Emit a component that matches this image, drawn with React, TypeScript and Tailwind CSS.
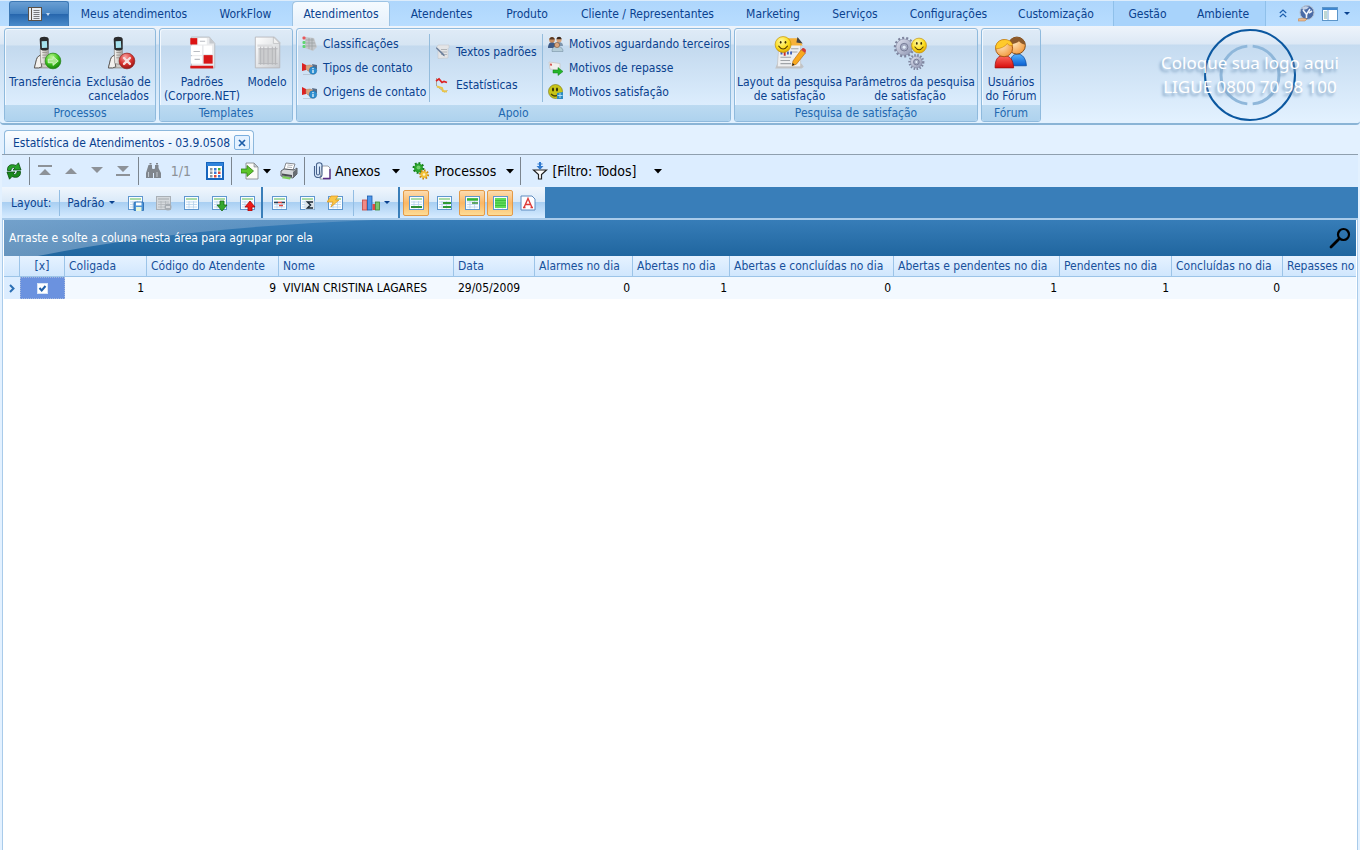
import type { ReactNode } from "react";

type Tab = { label: string; width: string; active?: boolean };

const TABS: Tab[] = [
  { label: "Meus atendimentos", width: "w-[130px]" },
  { label: "WorkFlow", width: "w-[93px]" },
  { label: "Atendimentos", width: "w-[98px]", active: true },
  { label: "Atendentes", width: "w-[103px]" },
  { label: "Produto", width: "w-[68px]" },
  { label: "Cliente / Representantes", width: "w-[173px]" },
  { label: "Marketing", width: "w-[78px]" },
  { label: "Serviços", width: "w-[86px]" },
  { label: "Configurações", width: "w-[101px]" },
  { label: "Customização", width: "w-[114px]" },
];

const COLUMNS = [
  { label: "Coligada", width: "w-[82px]", value: "1", right: true },
  { label: "Código do Atendente", width: "w-[132px]", value: "9", right: true },
  { label: "Nome", width: "w-[175px]", value: "VIVIAN CRISTINA LAGARES", right: false },
  { label: "Data", width: "w-[81px]", value: "29/05/2009", right: false },
  { label: "Alarmes no dia", width: "w-[98px]", value: "0", right: true },
  { label: "Abertas no dia", width: "w-[97px]", value: "1", right: true },
  { label: "Abertas e concluídas no dia", width: "w-[164px]", value: "0", right: true },
  { label: "Abertas e pendentes no dia", width: "w-[166px]", value: "1", right: true },
  { label: "Pendentes no dia", width: "w-[112px]", value: "1", right: true },
  { label: "Concluídas no dia", width: "w-[111px]", value: "0", right: true },
  { label: "Repasses no", width: "", value: "", right: true },
];

/* ── Small shared pieces ── */

function Caret({ className = "" }: { className?: string }) {
  return (
    <svg viewBox="0 0 8 5" className={`h-[5px] w-2 shrink-0 ${className}`} fill="currentColor">
      <path d="M0 0h8L4 4.6z" />
    </svg>
  );
}

function Svg16({ children }: { children: ReactNode }) {
  return <svg viewBox="0 0 16 16" className="h-4 w-4 shrink-0">{children}</svg>;
}

function Svg32({ children, viewBox = "0 0 32 32" }: { children: ReactNode; viewBox?: string }) {
  return <svg viewBox={viewBox} className="h-[34px] w-[34px] shrink-0">{children}</svg>;
}

function Defs() {
  return (
    <svg className="absolute h-0 w-0" aria-hidden="true">
      <defs>
        <linearGradient id="paper" x1="0" y1="0" x2="1" y2="1">
          <stop offset="0" stopColor="#ffffff" />
          <stop offset="1" stopColor="#c9ccd0" />
        </linearGradient>
        <linearGradient id="handset" x1="0" y1="0" x2="1" y2="0">
          <stop offset="0" stopColor="#fbfaf7" />
          <stop offset="1" stopColor="#a19d98" />
        </linearGradient>
        <radialGradient id="green" cx="0.4" cy="0.25" r="0.8">
          <stop offset="0" stopColor="#b6f58c" />
          <stop offset="0.55" stopColor="#3fc31d" />
          <stop offset="1" stopColor="#137a0b" />
        </radialGradient>
        <radialGradient id="red" cx="0.4" cy="0.25" r="0.8">
          <stop offset="0" stopColor="#f7a3a0" />
          <stop offset="0.55" stopColor="#d8322f" />
          <stop offset="1" stopColor="#8f1210" />
        </radialGradient>
        <radialGradient id="smile" cx="0.4" cy="0.3" r="0.75">
          <stop offset="0" stopColor="#fff9a5" />
          <stop offset="0.6" stopColor="#fbdc1c" />
          <stop offset="1" stopColor="#dda403" />
        </radialGradient>
        <radialGradient id="skin" cx="0.35" cy="0.35" r="0.8">
          <stop offset="0" stopColor="#ffe3b8" />
          <stop offset="1" stopColor="#f0912f" />
        </radialGradient>
        <linearGradient id="redBody" x1="0" y1="0" x2="0" y2="1">
          <stop offset="0" stopColor="#ff6a5e" />
          <stop offset="1" stopColor="#d60c0c" />
        </linearGradient>
        <linearGradient id="blueBody" x1="0" y1="0" x2="0" y2="1">
          <stop offset="0" stopColor="#53b2ff" />
          <stop offset="1" stopColor="#0a5fd0" />
        </linearGradient>
        <linearGradient id="steel" x1="0" y1="0" x2="1" y2="1">
          <stop offset="0" stopColor="#dfe2f0" />
          <stop offset="1" stopColor="#8d94b0" />
        </linearGradient>
        <linearGradient id="sheen" x1="0" y1="0" x2="1" y2="0">
          <stop offset="0" stopColor="#b4c8e0" stopOpacity="0.480" />
          <stop offset="1" stopColor="#b4c8e0" stopOpacity="0.250" />
        </linearGradient>
      </defs>
    </svg>
  );
}

/* ── Ribbon icons, 32px ── */

function Phone({ children }: { children: ReactNode }) {
  return (
    <Svg32 viewBox="0 0 32 32">
      <path d="M6 30l2-8c1-3 3-4 5-4l7 1 4 5v6z" fill="#cfccc7" stroke="#8d8985" strokeWidth="0.8" />
      <path d="M6 30l2-8c1-3 3-4 5-4l1 1c-2 2-2 6-1 10l-3 1z" fill="#f3f1ee" stroke="#4c4946" strokeWidth="0.8" />
      <path d="M11.500 12h7.500l.5 13c0 2-7.500 2-7.500 0z" fill="url(#handset)" stroke="#8a8681" strokeWidth="0.7" />
      <path d="M11 3c0-3 8.500-3 8.500 0v9c0 2-8 2.500-8 0z" fill="#2a2b2d" />
      <path d="M12.800 5l5-.4.3 6.400-5 .4z" fill="#a6e2ee" />
      <path d="M13.500 15.500h4.500M13.500 18h4.500M13.500 20.500h4.500" stroke="#9a9590" strokeWidth="0.9" />
      {children}
    </Svg32>
  );
}

function TransferIcon() {
  return (
    <Phone>
      <circle cx="23.500" cy="23.500" r="7.400" fill="url(#green)" stroke="#1d7d10" strokeWidth="0.6" />
      <path d="M19 21.800h4.500v-2.500l5 4.200-5 4.200v-2.500h-4.500z" fill="#a9e78f" stroke="#e4fadb" strokeWidth="0.700" />
    </Phone>
  );
}

function DeleteIcon() {
  return (
    <Phone>
      <circle cx="23.500" cy="23.500" r="7.400" fill="url(#red)" stroke="#861a18" strokeWidth="0.6" />
      <path d="M20.700 20.700l5.600 5.600M26.300 20.700l-5.600 5.600" stroke="#f5dedd" strokeWidth="2.200" strokeLinecap="round" />
    </Phone>
  );
}

function TemplateIcon() {
  return (
    <Svg32>
      <path d="M6 1h17l5 6v23H6z" fill="#e9eaec" stroke="#b5b8bd" strokeWidth="0.8" />
      <path d="M23 1l5 6h-5z" fill="#c6c9ce" />
      <rect x="12.500" y="2" width="8" height="6" fill="#fff" />
      <rect x="5.500" y="9" width="10.500" height="9" fill="#fff" />
      <rect x="17.500" y="9" width="8" height="8" fill="#fff" />
      <rect x="5.500" y="19" width="10.500" height="7" fill="#fff" />
      <rect x="5" y="2" width="6.500" height="6" fill="#dc1313" />
      <rect x="17.500" y="18" width="8.500" height="8" fill="#d81616" />
      <rect x="5" y="28" width="21.500" height="2.500" fill="#d81616" />
      <path d="M8 14.500h6M9 22h5M14 5h5" stroke="#b9bcc2" strokeWidth="1" />
    </Svg32>
  );
}

function ModelIcon() {
  return (
    <Svg32>
      <path d="M5 1h18l5 5v24H5z" fill="url(#paper)" stroke="#b3b5b8" strokeWidth="0.8" />
      <path d="M22 1l6 6h-6z" fill="#f1f1f1" stroke="#b3b5b8" strokeWidth="0.6" />
      <path d="M8 12h17v14H8z" fill="#cbccce" />
      <path d="M7 9h14" stroke="#dcdddf" strokeWidth="2" />
      <path d="M10 10v17M13 10v17M17 10v17M21 10v17M24 10v17M8 12h18M8 26h18" stroke="#b4b6b9" strokeWidth="0.9" />
    </Svg32>
  );
}

function Smile({ x, y, r }: { x: number; y: number; r: number }) {
  return (
    <g transform={`translate(${x} ${y})`}>
      <circle r={r} fill="url(#smile)" stroke="#c08c06" strokeWidth="0.6" />
      <ellipse cx={-r * 0.3} cy={-r * 0.28} rx="0.8" ry="1.300" fill="#3a2b05" />
      <ellipse cx={r * 0.3} cy={-r * 0.28} rx="0.8" ry="1.300" fill="#3a2b05" />
      <path d={`M${-r * 0.55} ${r * 0.2}Q0 ${r * 0.95} ${r * 0.55} ${r * 0.2}`} fill="none" stroke="#5a4106" strokeWidth="1" strokeLinecap="round" />
    </g>
  );
}

function SurveyLayoutIcon() {
  return (
    <Svg32>
      <path d="M2 30.500h25l2-1.500-2-3H4z" fill="#c2c4c6" />
      <path d="M6 3h17l3 4v22H4z" fill="#eeeff0" stroke="#bcbcbc" strokeWidth="0.6" />
      <path d="M14 2h10l4 7H16z" fill="#f7b23a" />
      <path d="M23 1l5 6-6-1z" fill="#454545" />
      <path d="M7 20h10M7 23h9M7 26h10M17 12h7M17 15h6" stroke="#a0a4a8" strokeWidth="1" />
      <path d="M8 14.500v3M14 14.500v3M17 14.500v3" stroke="#4464b8" strokeWidth="1.800" />
      <path d="M11 15v3.500" stroke="#c22f2f" strokeWidth="1.800" />
      <Smile x={9.500} y={8} r={7.500} />
      <path d="M26.500 13l4 3-8.500 10.500-4 1.500.8-4.500z" fill="#f9a91e" stroke="#b56a0c" strokeWidth="0.6" />
      <path d="M26.500 13l1-1.300c1-1 4 .8 3.500 2.300L30.500 16z" fill="#d43c34" />
      <path d="M18 28l.5-2.500 1.800 1.500z" fill="#222" />
    </Svg32>
  );
}

function Gear({ x, y, r }: { x: number; y: number; r: number }) {
  return (
    <g transform={`translate(${x} ${y})`}>
      <circle r={r} fill="none" stroke="#7f859f" strokeWidth="2.500" pathLength={28} strokeDasharray="1 1" />
      <circle r={r - 0.8} fill="url(#steel)" stroke="#7b819b" strokeWidth="0.5" />
      <circle r={r * 0.42} fill="#aab0c8" stroke="#6d738d" strokeWidth="0.8" />
      <circle r={r * 0.22} fill="#e3eefa" stroke="#7b819b" strokeWidth="0.400" />
    </g>
  );
}

function SurveyParamsIcon() {
  return (
    <Svg32>
      <Gear x={10.500} y={10.500} r={8.500} />
      <Gear x={22} y={24.500} r={6.300} />
      <Smile x={24.500} y={9} r={7} />
    </Svg32>
  );
}

function UsersIcon() {
  return (
    <Svg32>
      <path d="M15 28c0-8 3-11 7-11 5 0 8 4 8.500 11z" fill="url(#blueBody)" stroke="#0a4a9d" strokeWidth="0.7" />
      <circle cx="21.500" cy="9" r="8" fill="url(#skin)" stroke="#7e4a18" strokeWidth="0.9" />
      <path d="M13.600 8c.5-9 15.300-9 15.900 0-2 0-4-1-6-3-2 2-6 3-9.900 3z" fill="#8c5a2b" />
      <path d="M1 30c0-9 3-11.500 8.500-11.500S18 22 18.500 30z" fill="url(#redBody)" stroke="#97100f" strokeWidth="0.7" />
      <circle cx="9.500" cy="11.500" r="8" fill="url(#skin)" stroke="#a8560f" strokeWidth="0.9" />
      <path d="M1.500 12C1 1 17 1 17.500 9c-2 0-4 0-5-2-2 3-6 5-11 5z" fill="#ffca2b" stroke="#c07909" strokeWidth="0.5" />
    </Svg32>
  );
}

/* ── Ribbon icons, 16px ── */

function ClassifyIcon() {
  return (
    <Svg16>
      <path d="M3 1l9 1 3 9-4 4-8-3z" fill="#c3c6ca" />
      <path d="M4 4h8M4 7h9M4 10h10M7 2v11M10 2v12" stroke="#999da2" strokeWidth="0.7" />
      <rect x="0.500" y="0.500" width="3" height="3" rx="1" fill="#e8575a" />
      <rect x="0.500" y="5" width="3" height="3" rx="1" fill="#5fd672" />
      <rect x="0.500" y="9" width="3" height="3" rx="1" fill="#5fd672" />
    </Svg16>
  );
}

function ContactIcon() {
  return (
    <Svg16>
      <path d="M1 14.500h12" stroke="#aab6c2" strokeWidth="1" opacity="0.6" />
      <path d="M0 3l4 2v5l-4 1z" fill="#dc2222" />
      <path d="M4 5.500l4-.5 3 1 1 3-3 3-3-1-2-2z" fill="#d9a27c" stroke="#b07f5e" strokeWidth="0.5" />
      <path d="M10 4l5 1v4l-3 1z" fill="#5a6f89" />
      <circle cx="11" cy="10.500" r="3.800" fill="#2e8fd0" stroke="#1b6098" strokeWidth="0.4" />
      <path d="M11 10v3M11 8v1.200" stroke="#fff" strokeWidth="1.200" />
    </Svg16>
  );
}

function TextsIcon() {
  return (
    <Svg16>
      <path d="M3 1h11v2.500l-1 1V14l-10 .5V5L1.500 3.500z" fill="#e4e5e7" stroke="#c0c2c5" strokeWidth="0.5" />
      <path d="M6 5.500h6M6 8h6M6 10.500h6" stroke="#a5a8ac" strokeWidth="0.8" />
      <path d="M1.500 3l7.500 7 1 2.500-2.300-1.200L1 4.500z" fill="#6e819d" />
    </Svg16>
  );
}

function StatsIcon() {
  return (
    <Svg16>
      <path d="M1.500 1v8l8 6 3-1.500" fill="none" stroke="#a8a296" strokeWidth="1" />
      <path d="M2 9.500l5 1.500 1 3 4 .5" fill="none" stroke="#e9c44a" strokeWidth="2" />
      <path d="M1 4l3-2 3 3.500 2-1 3 1" fill="none" stroke="#db2323" strokeWidth="1.800" />
    </Svg16>
  );
}

function PeopleIcon() {
  return (
    <Svg16>
      <path d="M0 12c0-4 2-6 4-6s4 2 4 6z" fill="#3e5a86" />
      <circle cx="4" cy="4" r="2.800" fill="#c98d60" />
      <path d="M1.300 3.500C1.500 0 6.500 0 6.700 3.500z" fill="#5a3a22" />
      <path d="M7 10c0-3 2-4 4-4s4 1 4 4z" fill="#7c94ad" />
      <circle cx="11" cy="3.800" r="2.600" fill="#d8a47c" />
      <path d="M8.500 3.300C8.600 0 13.500 0 13.600 3.300z" fill="#3c2a1e" />
      <path d="M4 15.500c0-4 2-5 5-5s6 1 6 5z" fill="#b4ccd8" stroke="#6d8798" strokeWidth="0.5" />
      <circle cx="9" cy="9" r="2.600" fill="#d9a67f" stroke="#6f4527" strokeWidth="0.5" />
    </Svg16>
  );
}

function ForwardMailIcon() {
  return (
    <Svg16>
      <path d="M1 2l11 1.500v7L2 9z" fill="#f1efee" stroke="#c9c2be" strokeWidth="0.7" />
      <path d="M2 3.500l2 .3v2l-2-.3z" fill="#d65b55" />
      <path d="M5 10h5V7.500l5 4-5 4V13H5z" fill="#24b52b" stroke="#138018" strokeWidth="0.5" />
    </Svg16>
  );
}

function SatisfactionIcon() {
  return (
    <Svg16>
      <circle cx="7.500" cy="7.500" r="7" fill="#c8c518" stroke="#77740e" strokeWidth="0.6" />
      <ellipse cx="5" cy="5.500" rx="1" ry="2" fill="#333208" />
      <ellipse cx="9" cy="5.500" rx="1" ry="2" fill="#333208" />
      <path d="M3 10q4 4 8 0" fill="none" stroke="#4c4a09" strokeWidth="1.300" />
      <path d="M9 9l6-1v7H9z" fill="#2e8dc4" />
      <path d="M12 9v5M9.500 11.500h5" stroke="#bfe5f7" strokeWidth="0.900" />
    </Svg16>
  );
}

/* ── Toolbar icons ── */

function RefreshIcon() {
  return (
    <svg viewBox="0 0 16 18" className="h-[18px] w-4 shrink-0">
      <path d="M1.500 8.500C1 3 5.500 1.500 10 3.500L12.500.8 15 8H7l2-2C7 5 5 6 5 8.500z" fill="#26a12a" stroke="#0b4f10" strokeWidth="0.8" />
      <path d="M14.500 9.500c.5 5.500-4 7-8.500 5L3.500 17.200 1 10h8l-2 2c2 1 4 0 4-2.500z" fill="#188a1c" stroke="#0b4f10" strokeWidth="0.8" />
    </svg>
  );
}

function NavIcon({ kind }: { kind: "first" | "prev" | "next" | "last" }) {
  return (
    <svg viewBox="0 0 14 12" className="h-3 w-3.5 shrink-0" fill="#8d9298">
      {kind === "first" && <path d="M0 0h14v2H0zM7 4l6 6H1z" />}
      {kind === "prev" && <path d="M7 3l6 6H1z" />}
      {kind === "next" && <path d="M1 2h12L7 8z" />}
      {kind === "last" && <path d="M1 1h12L7 7zM0 9h14v2H0z" />}
    </svg>
  );
}

function BinocularsIcon() {
  return (
    <svg viewBox="0 0 17 16" className="h-4 w-[17px] shrink-0" fill="#80868d">
      <path d="M3.500 2H7v3l1 2v8H1v-5zM10 2h3.500v3l2.500 5v5H9V7l1-2z" />
      <path d="M7 6h3v4H7z" />
      <path d="M3.500 9v5M12 9v5" stroke="#c0c6cc" strokeWidth="1" />
      <path d="M4.500 .8h2M11 .8h2" stroke="#80868d" strokeWidth="1.500" />
    </svg>
  );
}

function GridIcon() {
  return (
    <svg viewBox="0 0 18 18" className="h-[18px] w-[18px] shrink-0">
      <rect x="1" y="1" width="16" height="16" fill="#fff" stroke="#1765bd" strokeWidth="2" />
      <rect x="1" y="1" width="16" height="3" fill="#2f83dc" />
      <path d="M4 6h2.500v2.500H4zM4 9.500h2.500V12H4zM4 13h2.500v2.500H4z" fill="#8b95a0" />
      <path d="M8 6h2.500v2.500H8zM12 13h2.500v2.500H12zM8 9.500h2.500V12H8z" fill="#3577d8" />
      <path d="M12 6h2.500v2.500H12z" fill="#49ad3c" />
      <path d="M8 13h2.500v2.500H8zM12 9.500h2.500V12H12z" fill="#d8483b" />
    </svg>
  );
}

function ExportIcon() {
  return (
    <svg viewBox="0 0 18 18" className="h-[18px] w-[18px] shrink-0">
      <path d="M5 1h8l4 4v12H5z" fill="#fbfbf7" stroke="#7b8084" strokeWidth="0.8" />
      <path d="M13 1l4 4h-4z" fill="#c6cbd0" stroke="#7b8084" strokeWidth="0.6" />
      <path d="M0 7h6V3.500L12.500 9 6 14.500V11H0z" fill="#5cc62a" stroke="#2c7d10" strokeWidth="0.8" />
    </svg>
  );
}

function PrinterIcon() {
  return (
    <svg viewBox="0 0 18 18" className="h-[18px] w-[18px] shrink-0">
      <path d="M6 1l9 1-2 6-9-1z" fill="#fff" stroke="#6b6f74" strokeWidth="0.8" />
      <path d="M7.500 3l5 .5M7 5l5 .5" stroke="#9aa0a6" strokeWidth="0.8" />
      <path d="M1 9l3-2 10 1 3-2v6l-4 4-12-2z" fill="#d4d7da" stroke="#4f5358" strokeWidth="0.9" />
      <path d="M13 10l4-3.500V12l-4 4z" fill="#686d73" />
      <path d="M2 11.500l10 1.500v2l-10-1.500z" fill="#4b4f54" />
      <path d="M3 14l8 1.500-1 2-8-1.300z" fill="#7fd05c" />
    </svg>
  );
}

function AttachIcon() {
  return (
    <svg viewBox="0 0 18 18" className="h-[18px] w-[18px] shrink-0">
      <path d="M9 4h6l2 2v11H7z" fill="#fff" stroke="#7a7c84" strokeWidth="0.7" />
      <path d="M10 16.500h7V7" fill="none" stroke="#5b2d86" strokeWidth="1.300" />
      <path d="M6.500 4.500v7c0 2-3 2-3 0V3c0-3 5.500-3 5.500 0v9.500c0 4-7.500 4-7.500 0V4" fill="none" stroke="#46628c" strokeWidth="1.100" />
    </svg>
  );
}

function ProcessIcon() {
  return (
    <svg viewBox="0 0 18 18" className="h-[18px] w-[18px] shrink-0">
      <circle cx="6.500" cy="6" r="4.500" fill="#2aa52d" />
      <circle cx="6.500" cy="6" r="4.900" fill="none" stroke="#16801c" strokeWidth="2" pathLength={16} strokeDasharray="1 1" />
      <circle cx="6.500" cy="5.500" r="2" fill="#6fd06c" />
      <circle cx="12" cy="12.500" r="3.600" fill="#f2c037" />
      <circle cx="12" cy="12.500" r="4.200" fill="none" stroke="#c8870f" strokeWidth="1.800" pathLength={16} strokeDasharray="1 1" />
      <circle cx="12" cy="12.500" r="1.300" fill="#fff2c6" />
    </svg>
  );
}

function FilterIcon() {
  return (
    <svg viewBox="0 0 16 18" className="h-[18px] w-4 shrink-0">
      <path d="M1.500 8h13l-5 4.500V17H6.500v-4.500z" fill="#fff" stroke="#222" strokeWidth="1.200" />
      <path d="M8 0v5" stroke="#2e79cf" strokeWidth="2" />
      <path d="M4.500 4h7L8 7.800z" fill="#2e79cf" />
      <path d="M5.500 2h5" stroke="#2e79cf" strokeWidth="1" />
    </svg>
  );
}

/* Sheet with a title band; each layout icon draws its mark over it */
function Sheet({ children, gray = false }: { children?: ReactNode; gray?: boolean }) {
  return (
    <svg viewBox="0 0 17 16" className="h-4 w-[17px] shrink-0">
      <rect x="1.500" y="1.500" width="14" height="13" fill={gray ? "#d5d9dd" : "#fafdff"} stroke={gray ? "#a9b0b7" : "#5f97cf"} strokeWidth="1" />
      <path d="M3 4h11" stroke={gray ? "#b3b8bd" : "#8fcf8b"} strokeWidth="1.500" />
      <path d="M3 7h11M3 9.500h11M3 12h11M6 6v7.500M10.500 6v7.500" stroke={gray ? "#b0b5ba" : "#b6d2ec"} strokeWidth="0.800" />
      {children}
    </svg>
  );
}

const LAYOUT_ICONS: { name: string; icon: ReactNode }[] = [
  {
    name: "Salvar layout",
    icon: (
      <Sheet>
        <rect x="7" y="7" width="9.500" height="9" rx="1" fill="#4a93d8" stroke="#1f62a8" strokeWidth="0.800" />
        <rect x="9" y="7.500" width="5.500" height="3" fill="#fff" />
        <rect x="9" y="12" width="5.500" height="4" fill="#e6f5dc" />
      </Sheet>
    ),
  },
  { name: "Excluir layout", icon: <Sheet gray><circle cx="13" cy="12" r="3.500" fill="#a7adb3" /><path d="M11 12h4" stroke="#e4e7ea" strokeWidth="1.500" /></Sheet> },
  { name: "Colunas", icon: <Sheet /> },
  { name: "Importar layout", icon: <Sheet><path d="M9 6h4v4h3l-5 6-5-6h3z" fill="#36a82d" stroke="#1b6a15" strokeWidth="0.800" /></Sheet> },
  { name: "Exportar layout", icon: <Sheet><path d="M9 16h4v-4h3l-5-6-5 6h3z" fill="#f01a1a" stroke="#a00c0c" strokeWidth="0.800" /></Sheet> },
];

const VIEW_ICONS: { name: string; icon: ReactNode }[] = [
  { name: "Formatação", icon: <Sheet><path d="M3 7.500h4M11 7.500h3" stroke="#2c3f52" strokeWidth="1.600" /><path d="M7 7.500h4M8 10.500h4" stroke="#e0463f" strokeWidth="1.600" /></Sheet> },
  { name: "Totais", icon: <Sheet><rect x="6" y="5.500" width="9.500" height="9" fill="#dbe3ea" /><path d="M14 7H8.500l3 3-3 3H14" fill="none" stroke="#1d2a36" strokeWidth="1.500" /></Sheet> },
  { name: "Atualização rápida", icon: <Sheet><path d="M4 1h7L8.500 5H12L4 12l2-5H0z" fill="#fbc646" stroke="#dc9418" strokeWidth="0.700" /></Sheet> },
];

const BAND_ICONS: { name: string; on: boolean; icon: ReactNode }[] = [
  { name: "Rodapé", on: true, icon: <Sheet><path d="M3 12h11" stroke="#2f8e33" strokeWidth="2" /></Sheet> },
  { name: "Rodapé do grupo", on: false, icon: <Sheet><path d="M7 8h8M7 12h8" stroke="#2f9a35" strokeWidth="2.200" /></Sheet> },
  { name: "Cabeçalho", on: true, icon: <Sheet><path d="M3 4.500h11" stroke="#35b237" strokeWidth="2.500" /><path d="M8 8h6" stroke="#2f8e33" strokeWidth="1.500" /></Sheet> },
  { name: "Linhas alternadas", on: true, icon: <Sheet><rect x="3" y="3" width="11" height="10" fill="#5fdc58" /><path d="M3 5.500h11M3 8h11M3 10.500h11" stroke="#35b637" strokeWidth="0.800" /></Sheet> },
];

/* ── Ribbon pieces ── */

function RibbonGroup({ title, className, children }: { title: string; className: string; children: ReactNode }) {
  return (
    <section className={`flex h-[94px] flex-col overflow-hidden rounded-[3px] border border-[#8fbadd] bg-[linear-gradient(to_bottom,#dfebf7_0,#d6e5f3_16px,#c3d9ee_17px,#dcedfd_76px)] shadow-[inset_1px_1px_0_#f2f8fe] ${className}`}>
      <div className="min-h-0 flex-1">{children}</div>
      <h2 className="h-4 bg-[linear-gradient(to_bottom,#bcdaf1,#aed2ee)] text-center leading-4 text-[#2369b0]">{title}</h2>
    </section>
  );
}

function BigButton({ icon, lines, className }: { icon: ReactNode; lines: string[]; className: string }) {
  return (
    <button type="button" className={`flex shrink-0 flex-col items-center pt-[7px] ${className}`}>
      {icon}
      <span className="mt-[5px] block leading-[14px] whitespace-nowrap">
        {lines.map((l) => <span key={l} className="block">{l}</span>)}
      </span>
    </button>
  );
}

function SmallButton({ icon, label, className = "" }: { icon: ReactNode; label: string; className?: string }) {
  return (
    <button type="button" className={`flex items-center gap-[5px] whitespace-nowrap ${className}`}>
      {icon}
      {label}
    </button>
  );
}

function GroupRule() {
  return <span className="mt-[5px] h-[68px] w-px shrink-0 bg-[#94bcdc]" />;
}

function Ribbon() {
  return (
    <div className="flex h-[99px] items-start gap-[3px] rounded-b-sm border-b-2 border-[#8ab4d6] bg-[linear-gradient(to_bottom,#eef4fb_0,#dce8f5_18px,#c5dbf0_19px,#e2f1ff_94px)] pt-[2px] pr-[18px] pl-1 text-[#0a428f]">
      <RibbonGroup title="Processos" className="w-[152px]">
        <div className="flex pl-[3px]">
          <BigButton icon={<TransferIcon />} lines={["Transferência"]} className="w-[74px]" />
          <BigButton icon={<DeleteIcon />} lines={["Exclusão de", "cancelados"]} className="w-[73px]" />
        </div>
      </RibbonGroup>
      <RibbonGroup title="Templates" className="w-[134px]">
        <div className="flex">
          <BigButton icon={<TemplateIcon />} lines={["Padrões", "(Corpore.NET)"]} className="w-[84px]" />
          <BigButton icon={<ModelIcon />} lines={["Modelo"]} className="w-[46px]" />
        </div>
      </RibbonGroup>
      <RibbonGroup title="Apoio" className="w-[435px]">
        <div className="flex">
          <div className="flex w-[132px] flex-col pt-[3px] pl-[5px]">
            <SmallButton icon={<ClassifyIcon />} label="Classificações" className="h-6" />
            <SmallButton icon={<ContactIcon />} label="Tipos de contato" className="h-6" />
            <SmallButton icon={<ContactIcon />} label="Origens de contato" className="h-6" />
          </div>
          <GroupRule />
          <div className="flex w-[112px] flex-col pt-[6px] pl-[5px]">
            <SmallButton icon={<TextsIcon />} label="Textos padrões" className="h-[33px]" />
            <SmallButton icon={<StatsIcon />} label="Estatísticas" className="h-[33px]" />
          </div>
          <GroupRule />
          <div className="flex flex-col pt-[3px] pl-[5px]">
            <SmallButton icon={<PeopleIcon />} label="Motivos aguardando terceiros" className="h-6" />
            <SmallButton icon={<ForwardMailIcon />} label="Motivos de repasse" className="h-6" />
            <SmallButton icon={<SatisfactionIcon />} label="Motivos satisfação" className="h-6" />
          </div>
        </div>
      </RibbonGroup>
      <RibbonGroup title="Pesquisa de satisfação" className="w-[244px]">
        <div className="flex">
          <BigButton icon={<SurveyLayoutIcon />} lines={["Layout da pesquisa", "de satisfação"]} className="w-[109px]" />
          <BigButton icon={<SurveyParamsIcon />} lines={["Parâmetros da pesquisa", "de satisfação"]} className="w-[132px]" />
        </div>
      </RibbonGroup>
      <RibbonGroup title="Fórum" className="w-[60px]">
        <div className="flex">
          <BigButton icon={<UsersIcon />} lines={["Usuários", "do Fórum"]} className="w-[58px]" />
        </div>
      </RibbonGroup>

      {/* Customer logo placeholder, text laid over the rings */}
      <div className="relative ml-auto flex h-[94px] w-[184px] flex-col items-center justify-center font-['Noto_Sans',sans-serif] text-[17px] leading-6 whitespace-nowrap text-white">
        <svg viewBox="0 0 94 94" className="absolute top-0 left-1/2 h-[94px] w-[94px] -translate-x-1/2" fill="none">
          <circle cx="47" cy="47" r="45" stroke="#0c58a0" strokeWidth="2" />
          <circle cx="47" cy="47" r="29" stroke="#8fb7da" strokeWidth="3" pathLength={100} strokeDasharray="47 3" strokeDashoffset="23.500" />
        </svg>
        <span className="relative [text-shadow:-2px_3px_3px_#7d9fc0]">Coloque sua logo aqui</span>
        <span className="relative [text-shadow:-2px_3px_3px_#7d9fc0]">LIGUE 0800 70 98 100</span>
      </div>
    </div>
  );
}

function TabBar() {
  return (
    <nav className="flex h-[26px] items-stretch border-t border-[#dcecfb] bg-[linear-gradient(to_bottom,#aed6fc,#b8ddff)] pl-[9px] text-[#0a428f]">
      <button type="button" aria-label="Menu" className="flex w-[60px] items-center justify-center gap-1 rounded-t-[3px] border border-b-0 border-[#3d79b5] bg-[linear-gradient(to_bottom,#6a9fd3_0,#4482c1_50%,#2766ad_51%,#4b8ccb_100%)] text-[#c4daf0]">
        <svg viewBox="0 0 14 14" className="h-3.5 w-3.5">
          <rect x="0.500" y="0.500" width="13" height="13" fill="#e8edf2" stroke="#5a5148" />
          <path d="M3.500 1v12" stroke="#5a5148" strokeWidth="1" />
          <path d="M5.500 3.500h6M5.500 5.500h6M5.500 7.500h6M5.500 9.500h6M5.500 11.500h6" stroke="#6a6c70" strokeWidth="0.900" />
        </svg>
        <svg viewBox="0 0 4 3" className="h-[3px] w-1" fill="currentColor"><path d="M0 0h4L2 3z" /></svg>
      </button>
      {TABS.map((t) => (
        <a
          key={t.label}
          href="#"
          className={`flex shrink-0 items-center justify-center whitespace-nowrap ${t.width} ${
            t.active ? "rounded-t-[4px] bg-[linear-gradient(to_bottom,#f6fbff,#e6f1fb)] shadow-[inset_1px_1px_0_#9cc3e4,inset_-1px_0_0_#9cc3e4]" : ""
          }`}
        >
          {t.label}
        </a>
      ))}
      <a href="#" className="flex w-[68px] shrink-0 items-center justify-center border-l border-[#8fc0ea] bg-[#a8d3fb]">Gestão</a>
      <a href="#" className="flex w-[85px] shrink-0 items-center justify-center border-r border-[#8fc0ea] bg-[#a8d3fb]">Ambiente</a>
      <div className="ml-auto flex items-center pr-[10px]">
        <button type="button" aria-label="Recolher" className="w-4">
          <svg viewBox="0 0 8 9" className="mx-auto h-[9px] w-2" fill="none" stroke="#1d5fae" strokeWidth="1.200">
            <path d="M.8 4L4 1l3.200 3M.8 8L4 5l3.200 3" />
          </svg>
        </button>
        <button type="button" aria-label="Portal" className="ml-[7px] w-[17px]">
          <svg viewBox="0 0 17 17" className="h-[17px] w-[17px]">
            <circle cx="9" cy="7.500" r="7" fill="#4a6ba6" stroke="#b3bfce" strokeWidth="1" />
            <path d="M4 3c2-2 5-2 7-1l-2 2-4 1z" fill="#c4d1e6" />
            <path d="M5 5l3.500 4.500M12 4L8.500 9.500V13M11 8l3-2" fill="none" stroke="#eef3fa" strokeWidth="1.600" />
            <path d="M0 14c3-1 6-1 9 0l-2 2H0z" fill="#eab98e" stroke="#b57845" strokeWidth="0.500" />
          </svg>
        </button>
        <button type="button" aria-label="Painéis" className="ml-[7px] flex items-center gap-1.5 text-[#0a428f]">
          <svg viewBox="0 0 16 14" className="h-3.5 w-4">
            <rect x="0.500" y="0.500" width="15" height="13" fill="#fff" stroke="#5c95c9" />
            <path d="M1 2h14" stroke="#3f87cf" strokeWidth="2" />
            <path d="M6 3v10" stroke="#7eaedb" strokeWidth="1" />
            <path d="M2 5h3M2 7h3M2 9h3M2 11h3" stroke="#7fb0a9" strokeWidth="1" />
          </svg>
          <svg viewBox="0 0 6 3" className="h-[3px] w-1.5" fill="currentColor"><path d="M0 0h6L3 3z" /></svg>
        </button>
      </div>
    </nav>
  );
}

/* ── Document area ── */

function ToolRule() {
  return <span className="h-[28px] w-px shrink-0 bg-[#7b858f]" />;
}

function RecordToolbar() {
  const cell = "flex h-7 shrink-0 items-center justify-center";
  return (
    <div role="toolbar" aria-label="Registros" className="flex h-[33px] items-center border-t border-[#8f9fae] bg-[#dcedff] pl-0.5 text-[14px] text-black">
      <button type="button" aria-label="Atualizar" className={`${cell} mr-[5px] w-5`}><RefreshIcon /></button>
      <ToolRule />
      <button type="button" aria-label="Primeiro" className={`${cell} ml-0.5 w-[26px]`}><NavIcon kind="first" /></button>
      <button type="button" aria-label="Anterior" className={`${cell} w-[26px]`}><NavIcon kind="prev" /></button>
      <button type="button" aria-label="Próximo" className={`${cell} w-[26px]`}><NavIcon kind="next" /></button>
      <button type="button" aria-label="Último" className={`${cell} mr-0.5 w-[26px]`}><NavIcon kind="last" /></button>
      <ToolRule />
      <button type="button" aria-label="Localizar" className={`${cell} w-7`}><BinocularsIcon /></button>
      <span className="w-7 text-center text-[#8d9298]">1/1</span>
      <button type="button" aria-label="Grade" className={`${cell} mr-[3px] ml-[7px] w-[26px]`}><GridIcon /></button>
      <ToolRule />
      <button type="button" aria-label="Exportar" className={`${cell} ml-1.5 w-9 gap-1`}><ExportIcon /><Caret /></button>
      <button type="button" aria-label="Imprimir" className={`${cell} mx-[3px] w-6`}><PrinterIcon /></button>
      <ToolRule />
      <button type="button" className={`${cell} ml-2 gap-1`}><AttachIcon />Anexos<Caret className="ml-2" /></button>
      <button type="button" className={`${cell} ml-3 gap-1`}><ProcessIcon />Processos<Caret className="ml-1.5" /></button>
      <span className="w-1.5" />
      <ToolRule />
      <button type="button" className={`${cell} ml-[11px] gap-1`}><FilterIcon />[Filtro: Todos]<Caret className="ml-3.5" /></button>
    </div>
  );
}

function LayoutToolbar() {
  const cell = "flex h-[26px] shrink-0 items-center justify-center";
  const strip = "flex items-center bg-[linear-gradient(to_bottom,#f0f6fd_0,#d9e9f8_49%,#a9cff2_50%,#d6ebff_100%)]";
  return (
    <div role="toolbar" aria-label="Layout" className="flex h-[31px] items-stretch gap-0.5 bg-[#397eb9] text-[#0a428f]">
      <div className={`${strip} w-[259px]`}>
        <label htmlFor="layout" className="pl-[9px]">Layout:</label>
        <span className="mr-[7px] ml-2 h-[26px] w-px bg-[#92bde3]" />
        <div className="relative flex w-[55px] items-center">
          <select id="layout" className="w-full appearance-none bg-transparent pr-3 outline-none">
            <option>Padrão</option>
          </select>
          <svg viewBox="0 0 6 3" className="pointer-events-none absolute right-1.5 h-[3px] w-1.5" fill="currentColor"><path d="M0 0h6L3 3z" /></svg>
        </div>
        {LAYOUT_ICONS.map((i) => (
          <button key={i.name} type="button" aria-label={i.name} className={`${cell} w-7`}>{i.icon}</button>
        ))}
      </div>
      <div className={`${strip} w-[135px] pl-0.5`}>
        {VIEW_ICONS.map((i) => (
          <button key={i.name} type="button" aria-label={i.name} className={`${cell} w-7`}>{i.icon}</button>
        ))}
        <span className="ml-1 h-[26px] w-px bg-[#92bde3]" />
        <button type="button" aria-label="Gráficos" className="ml-2 flex items-center gap-1">
          <svg viewBox="0 0 18 16" className="h-4 w-[18px]">
            <rect x="0.500" y="5" width="4.500" height="10" fill="#f08a86" stroke="#c54743" strokeWidth="0.800" />
            <rect x="5.500" y="1" width="4.500" height="14" fill="#4f97ea" stroke="#1c5cad" strokeWidth="0.800" />
            <rect x="10.500" y="9" width="3" height="6" fill="#e04a46" />
            <rect x="13.500" y="7" width="4" height="8" fill="#7bc66f" stroke="#3e8a37" strokeWidth="0.800" />
          </svg>
          <svg viewBox="0 0 6 3" className="h-[3px] w-1.5" fill="currentColor"><path d="M0 0h6L3 3z" /></svg>
        </button>
      </div>
      <div className={`${strip} w-[145px] pl-0.5`}>
        {BAND_ICONS.map((i) => (
          <button
            key={i.name}
            type="button"
            aria-label={i.name}
            aria-pressed={i.on}
            className={`${cell} mx-px w-[26px] ${i.on ? "rounded-[2px] border border-[#e39a48] bg-[linear-gradient(to_bottom,#fcdcb0,#fbb765_50%,#fddc96)]" : ""}`}
          >
            {i.icon}
          </button>
        ))}
        <button type="button" aria-label="Fonte" className={`${cell} w-7`}>
          <svg viewBox="0 0 16 16" className="h-4 w-4">
            <path d="M1 1h11l3 3v11H1z" fill="#fdfdff" stroke="#5f8cc0" />
            <path d="M4 12.500L8 3.500l4 9M5.500 9.500h5M3 12.500h2.500M10.500 12.500H13" fill="none" stroke="#dd3b38" strokeWidth="1.400" />
          </svg>
        </button>
      </div>
    </div>
  );
}

function GroupPanel() {
  return (
    <div className="relative flex h-[36px] items-center justify-between bg-[linear-gradient(to_bottom,#377db8,#20669f)] px-[5px] text-white">
      <svg viewBox="0 0 370 36" preserveAspectRatio="none" className="absolute top-0 left-0 h-full w-[370px]">
        <path d="M0 0h370Q170 8 34 36H0z" fill="url(#sheen)" />
      </svg>
      <p className="relative">Arraste e solte a coluna nesta área para agrupar por ela</p>
      <button type="button" aria-label="Pesquisar" className="relative">
        <svg viewBox="0 0 22 22" className="h-[22px] w-[22px]" fill="none" stroke="#000" strokeLinecap="round">
          <circle cx="14.500" cy="7.500" r="5.500" strokeWidth="2.200" />
          <path d="M10 12l-8 8" strokeWidth="2.800" />
        </svg>
      </button>
    </div>
  );
}

function DataGrid() {
  const head = "overflow-hidden border-r border-b border-[#9cc4e8] px-1 font-normal whitespace-nowrap";
  return (
    <table className="w-full table-fixed border-separate border-spacing-0">
      <thead>
        <tr className="h-[21px] bg-[linear-gradient(to_bottom,#e6f2ff,#cfe6fd)] text-[#17509b]">
          <th className={`${head} w-4`} />
          <th className={`${head} w-[45px] text-center`}>[x]</th>
          {COLUMNS.map((c) => (
            <th key={c.label} className={`${head} ${c.width} text-left last:border-r-0`}>{c.label}</th>
          ))}
        </tr>
      </thead>
      <tbody>
        <tr className="h-[22px] bg-[#f3f9ff] text-black">
          <td className="bg-[#dcedff] text-center">
            <svg viewBox="0 0 6 9" className="mx-auto h-[9px] w-1.5" fill="none" stroke="#2b6fb5" strokeWidth="2"><path d="M1 1l3.500 3.500L1 8" /></svg>
          </td>
          <td className="border border-dotted border-[#a5b8dd] bg-[#6b92df]">
            <div className="relative mx-auto h-[11px] w-[11px]">
              <input type="checkbox" defaultChecked aria-label="Selecionar registro" className="peer block h-[11px] w-[11px] appearance-none border border-[#d5e4f7] bg-white" />
              <svg viewBox="0 0 11 11" className="pointer-events-none absolute inset-0 hidden h-[11px] w-[11px] peer-checked:block" fill="none" stroke="#1f5fa8" strokeWidth="2"><path d="M2.500 5l2.200 2.500L8.500 3" /></svg>
            </div>
          </td>
          {COLUMNS.map((c) => (
            <td key={c.label} className={`overflow-hidden whitespace-nowrap ${c.right ? "pr-[3px] text-right" : "pl-1"}`}>{c.value}</td>
          ))}
        </tr>
      </tbody>
    </table>
  );
}

export default function App() {
  return (
    <div className="flex min-h-screen flex-col overflow-hidden bg-[#e3f1ff] font-['DejaVu_Sans_Condensed','Roboto',sans-serif] text-[12px] leading-4">
      <Defs />
      <header>
        <TabBar />
        <Ribbon />
      </header>
      <main className="flex flex-1 flex-col">
        <div className="flex h-[29px] items-end pl-1">
          <div className="flex h-6 items-center gap-1 rounded-t-[4px] border border-b-0 border-[#8db8dc] bg-[linear-gradient(to_bottom,#fbfdff,#e0effe)] pr-[3px] pl-2 text-[#0a428f]">
            <span className="whitespace-nowrap">Estatística de Atendimentos - 03.9.0508</span>
            <button type="button" aria-label="Fechar" className="flex h-[15px] w-4 items-center justify-center rounded-[2px] border border-[#7aaede] bg-[#e3f1ff]">
              <svg viewBox="0 0 8 8" className="h-2 w-2" stroke="#1c5da8" strokeWidth="1.700"><path d="M1 1l6 6M7 1L1 7" /></svg>
            </button>
          </div>
        </div>
        <div className="mx-0.5 flex flex-1 flex-col">
          <RecordToolbar />
          <LayoutToolbar />
          <div className="flex flex-1 flex-col border-x border-t-2 border-[#a9cbea] bg-white px-px">
            <GroupPanel />
            <DataGrid />
          </div>
        </div>
      </main>
    </div>
  );
}
